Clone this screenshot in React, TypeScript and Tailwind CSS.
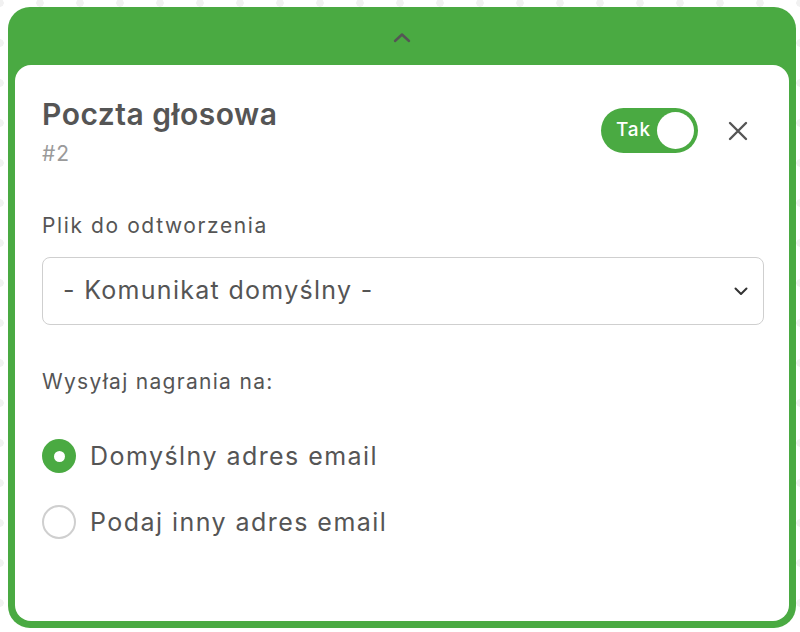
import { useState } from 'react'

const font = { fontFamily: 'Inter, "Noto Sans", sans-serif' }

export default function App() {
  const [enabled, setEnabled] = useState(true)
  const [target, setTarget] = useState<'default' | 'other'>('default')

  return (
    <div
      className="w-[800px] h-[632px] bg-white bg-[radial-gradient(circle,#f1f1f1_3.5px,transparent_4px)] bg-[length:40px_40px] bg-[position:-20px_-17px] pt-[7px] pl-[8px]"
      style={font}
    >
      <div className="w-[788px] h-[621px] rounded-[22px] bg-[#4aaa42] px-[7px] pb-[7px] flex flex-col">
        {/* pasek zwijania */}
        <div className="h-[58px] flex items-center justify-center">
          <svg width="18" height="11" viewBox="0 0 18 11" fill="none" className="mt-[3px]">
            <path d="M2 9L9 2.5L16 9" stroke="#555" strokeWidth="2.4" strokeLinecap="round" strokeLinejoin="round" />
          </svg>
        </div>

        <div className="flex-1 bg-white rounded-[16px] px-[27px] pt-[31px]">
          <div className="flex items-start justify-between">
            <div>
              <h2 className="text-[30px] leading-[36px] font-semibold text-[#555] tracking-[0.5px]">Poczta głosowa</h2>
              <p className="mt-[9px] text-[21px] leading-[26px] text-[#9a9a9a] tracking-[1px]">#2</p>
            </div>
            <div className="flex items-center gap-[30px] mt-[12px] mr-[14px]">
              <button
                onClick={() => setEnabled(!enabled)}
                className="w-[97px] h-[45px] rounded-full bg-[#4aaa42] flex items-center justify-between pl-[15px] pr-[4px]"
              >
                <span className="text-white text-[19px] font-medium tracking-[0.8px]">Tak</span>
                <span className="w-[37px] h-[37px] rounded-full bg-white" />
              </button>
              <svg width="20" height="20" viewBox="0 0 20 20" fill="none">
                <path d="M2 2L18 18M18 2L2 18" stroke="#555" strokeWidth="2.4" strokeLinecap="round" />
              </svg>
            </div>
          </div>

          <p className="mt-[46px] text-[21px] leading-[26px] text-[#555] tracking-[1.6px]">Plik do odtworzenia</p>

          <div className="mt-[18px] w-[722px] h-[68px] border-[1.5px] border-[#cfcfcf] rounded-[8px] flex items-center justify-between pl-[20px] pr-[15px]">
            <span className="text-[25px] text-[#555] tracking-[1.3px]">- Komunikat domyślny -</span>
            <svg width="14" height="9" viewBox="0 0 14 9" fill="none">
              <path d="M1.5 1.5L7 7L12.5 1.5" stroke="#333" strokeWidth="2" strokeLinecap="round" strokeLinejoin="round" />
            </svg>
          </div>

          <p className="mt-[44px] text-[21px] leading-[26px] text-[#555] tracking-[1.3px]">Wysyłaj nagrania na:</p>

          <div className="mt-[44px] flex flex-col gap-[32px]">
            <label className="flex items-center gap-[14px] cursor-pointer" onClick={() => setTarget('default')}>
              {target === 'default' ? (
                <span className="w-[34px] h-[34px] rounded-full bg-[#4aaa42] flex items-center justify-center">
                  <span className="w-[11px] h-[11px] rounded-full bg-white" />
                </span>
              ) : (
                <span className="w-[34px] h-[34px] rounded-full border-2 border-[#cfcfcf]" />
              )}
              <span className="text-[25px] leading-[34px] text-[#555] tracking-[1.45px]">Domyślny adres email</span>
            </label>
            <label className="flex items-center gap-[14px] cursor-pointer" onClick={() => setTarget('other')}>
              {target === 'other' ? (
                <span className="w-[34px] h-[34px] rounded-full bg-[#4aaa42] flex items-center justify-center">
                  <span className="w-[11px] h-[11px] rounded-full bg-white" />
                </span>
              ) : (
                <span className="w-[34px] h-[34px] rounded-full border-2 border-[#cfcfcf]" />
              )}
              <span className="text-[25px] leading-[34px] text-[#555] tracking-[1.45px]">Podaj inny adres email</span>
            </label>
          </div>
        </div>
      </div>
    </div>
  )
}
